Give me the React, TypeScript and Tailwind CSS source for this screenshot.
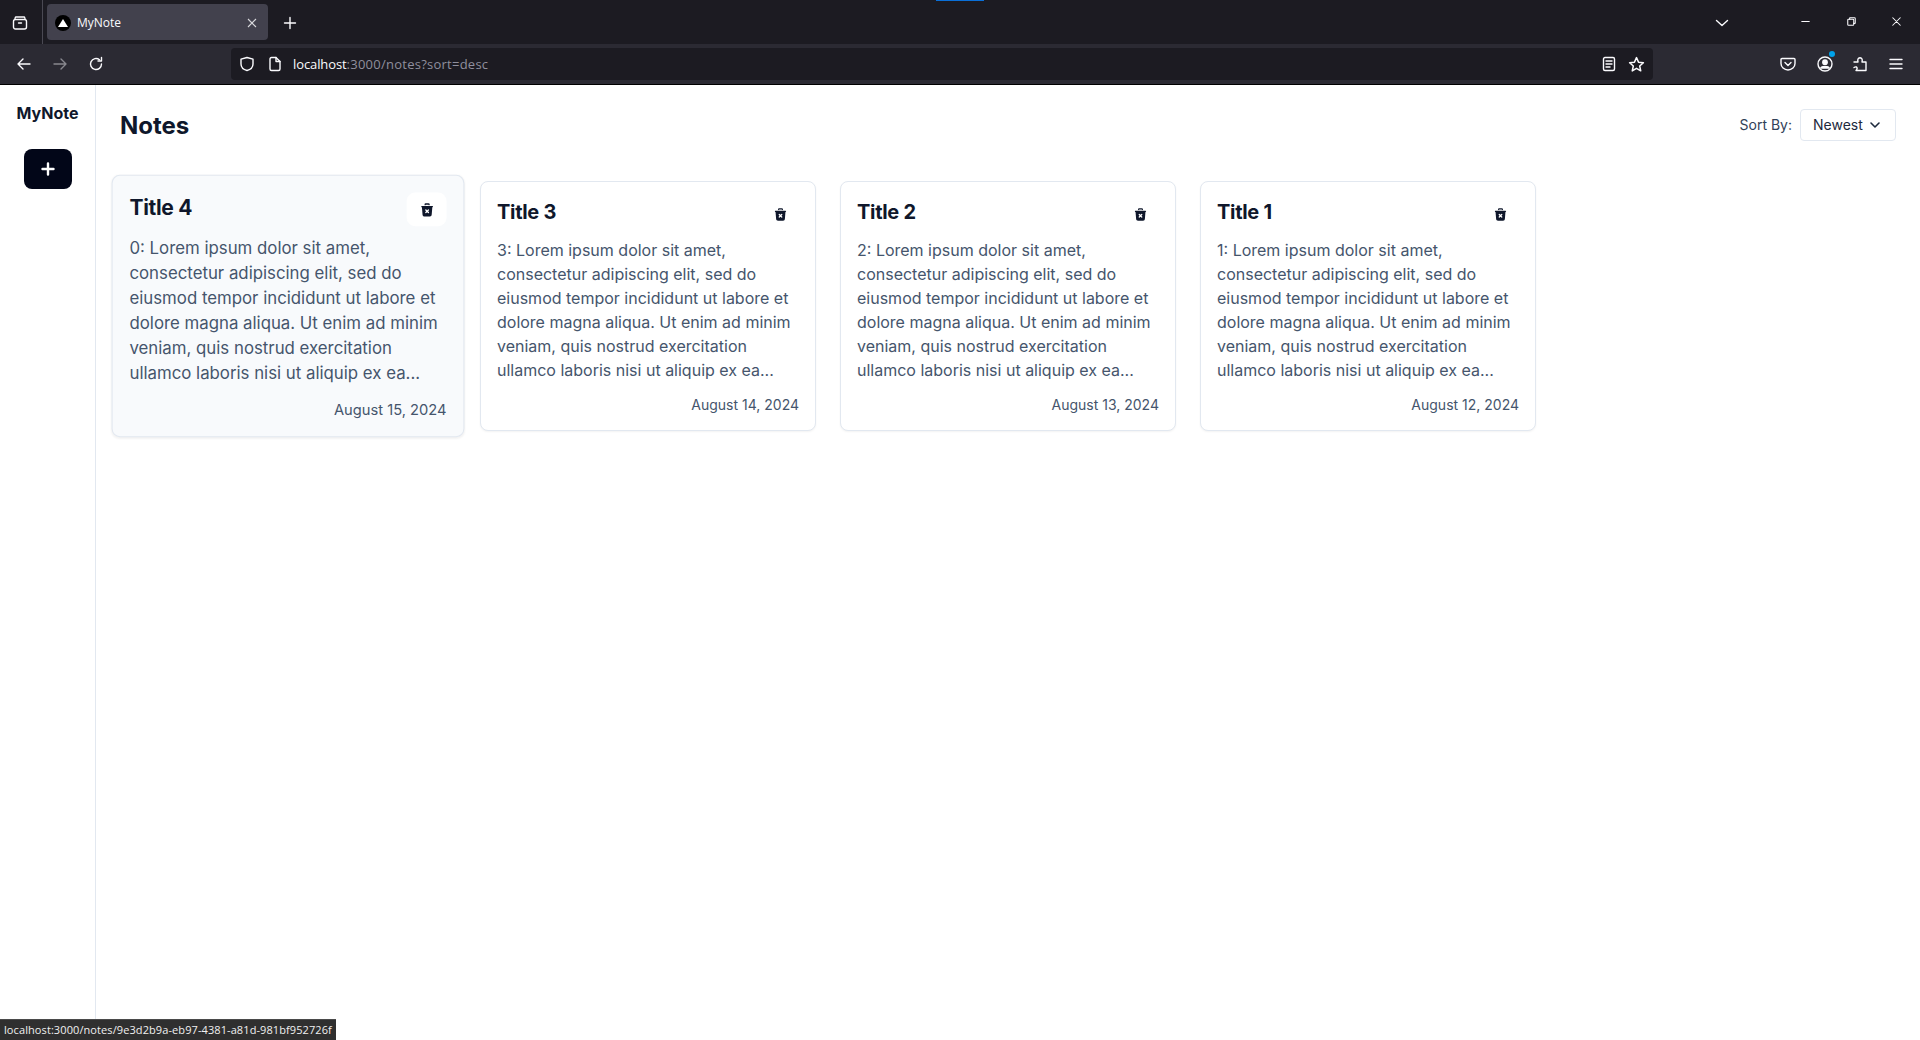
import { TbTrashXFilled } from "react-icons/tb";
import { FiChevronDown } from "react-icons/fi";

const stroke = { fill: "none", stroke: "#fbfbfe", strokeWidth: 1.4, strokeLinecap: "round" as const, strokeLinejoin: "round" as const };

function Ico({ children, size = 16, w = 36, className = "" }: { children: React.ReactNode; size?: number; w?: number; className?: string }) {
  return (
    <div className={`flex shrink-0 items-center justify-center ${className}`} style={{ width: w }}>
      <svg width={size} height={size} viewBox="0 0 16 16" {...stroke}>{children}</svg>
    </div>
  );
}

const notes = [
  { title: "Title 4", n: 0, date: "August 15, 2024", hover: true },
  { title: "Title 3", n: 3, date: "August 14, 2024" },
  { title: "Title 2", n: 2, date: "August 13, 2024" },
  { title: "Title 1", n: 1, date: "August 12, 2024" },
];

const lorem = "Lorem ipsum dolor sit amet, consectetur adipiscing elit, sed do eiusmod tempor incididunt ut labore et dolore magna aliqua. Ut enim ad minim veniam, quis nostrud exercitation ullamco laboris nisi ut aliquip ex ea...";

function Card({ title, n, date, hover }: { title: string; n: number; date: string; hover?: boolean }) {
  return (
    <div className={`w-[336px] rounded-lg border border-slate-200 p-4 shadow-xs ${hover ? "scale-105 bg-slate-50" : "bg-white"}`}>
      <div className="mb-2 flex items-start justify-between">
        <h2 className="text-xl font-bold leading-7 tracking-[-0.3px] text-slate-900">{title}</h2>
        <button className={`flex h-8 w-[38px] items-center justify-center rounded-lg text-slate-900 ${hover ? "bg-white" : ""}`}>
          <TbTrashXFilled size={15} />
        </button>
      </div>
      <p className="text-base leading-6 text-slate-600">{n}: {lorem}</p>
      <p className="mt-[13px] -mb-px text-right text-sm leading-5 text-slate-600">{date}</p>
    </div>
  );
}

export default function App() {
  return (
    <div className="relative flex h-[1040px] flex-col overflow-hidden bg-white font-['Inter',sans-serif]">
      {/* tab strip */}
      <div className="relative flex h-11 shrink-0 items-center bg-[#1c1b22] font-['Open_Sans',sans-serif]">
        <div className="absolute left-[936px] top-0 h-px w-[48px] bg-[#0a6fd8]" />
        <Ico w={40} className="mr-[2px] pt-[2px]">
          <path d="M3 3.5 L3.6 2 H12.4 L13 3.5" />
          <rect x="1.5" y="4.5" width="13" height="9.5" rx="2" />
          <path d="M6.5 8 H9.5" />
        </Ico>
        <div className="h-11 w-px bg-[#4a4953]" />
        <div className="ml-1 flex h-9 w-[221px] items-center rounded bg-[#42414d] pl-2 pr-[10px] pt-[2px]">
          <div className="flex h-4 w-4 items-center justify-center rounded-full bg-black">
            <svg width="10" height="8" viewBox="0 0 10 8"><path d="M5 0 L10 8 H0 Z" fill="#fff" /></svg>
          </div>
          <span className="ml-[6px] flex-1 text-xs text-[#fbfbfe]">MyNote</span>
          <svg width="12" height="12" viewBox="0 0 12 12" fill="none" stroke="#d8d8dc" strokeWidth="1.1"><path d="M2 2 L10 10 M10 2 L2 10" /></svg>
        </div>
        <Ico w={44} className="pt-[2px]"><path d="M8 2.5 V13.5 M2.5 8 H13.5" /></Ico>
        <div className="flex-1" />
        <Ico w={32} size={16} className="pt-[2px]"><path d="M2.5 5.5 L8 10.5 L13.5 5.5" /></Ico>
        <div className="w-[44px]" />
        <Ico w={46} size={12} className="pl-[4px] pt-[2px]"><path d="M1 6 H11" /></Ico>
        <Ico w={46} size={12} className="pl-[4px] pt-[2px]"><rect x="1" y="3" width="8" height="8" rx="1" /><path d="M3.5 3 V1.5 Q3.5 1 4 1 H10 Q11 1 11 2 V8 Q11 8.5 10.5 8.5 H9" /></Ico>
        <Ico w={46} size={12} className="pl-[2px] pt-[2px]"><path d="M1 1 L11 11 M11 1 L1 11" /></Ico>
      </div>

      {/* toolbar */}
      <div className="flex h-[41px] shrink-0 items-center border-b border-black bg-[#2b2a33] pl-[6px] pr-1 font-['Open_Sans',sans-serif]">
        <Ico w={36}><path d="M2 8 H14 M2 8 L7 3 M2 8 L7 13" /></Ico>
        <Ico w={36}><g opacity="0.45"><path d="M14 8 H2 M14 8 L9 3 M14 8 L9 13" /></g></Ico>
        <Ico w={36}><path d="M13.5 8 A5.5 5.5 0 1 1 11.5 3.8" /><path d="M13.5 1.5 V5 H10" /></Ico>
        <div className="ml-[117px] flex h-8 w-[1422px] shrink-0 items-center rounded bg-[#1c1b22] pl-2 pr-[7px]">
          <Ico w={16}><path d="M8 1.5 L14 3.2 V8 C14 11.5 11 13.7 8 14.5 C5 13.7 2 11.5 2 8 V3.2 Z" /></Ico>
          <Ico w={16} className="ml-3"><path d="M3 3 Q3 1.5 4.5 1.5 H9 L13 5.5 V13 Q13 14.5 11.500 14.5 H4.5 Q3 14.5 3 13 Z" /><path d="M9 1.5 V5.5 H13" /></Ico>
          <span className="ml-[10px] flex-1 pt-[2px] text-[13px] tracking-[-0.1px] text-[#fbfbfe]">localhost<span className="tracking-[0.25px] text-[#8f8f9d]">:3000/notes?sort=desc</span></span>
          <Ico w={16}><rect x="2.500" y="1.500" width="11" height="13" rx="1.500" /><path d="M5 5 H11 M5 8 H11 M5 11 H9" /></Ico>
          <Ico w={20} size={17} className="ml-[9px]"><path d="M8 1.500 L9.900 5.800 L14.500 6.300 L11 9.400 L12 14 L8 11.600 L4 14 L5 9.400 L1.500 6.300 L6.100 5.800 Z" /></Ico>
        </div>
        <div className="w-[117px] shrink-0" />
        <Ico w={36}><path d="M2 2.500 H14 Q15 2.500 15 3.500 V7.500 A7 6.500 0 0 1 1 7.500 V3.500 Q1 2.500 2 2.500 Z" /><path d="M5 6.500 L8 9.500 L11 6.500" /></Ico>
        <div className="relative">
          <Ico w={37}><circle cx="8" cy="8" r="7" /><circle cx="8" cy="6.200" r="2.200" fill="#fbfbfe" /><path d="M3.800 12 C4.500 9.800 11.500 9.800 12.200 12 Z" fill="#fbfbfe" /></Ico>
          <div className="absolute right-[8px] top-[-5px] h-[6px] w-[6px] rounded-full bg-[#00a2ea]" />
        </div>
        <Ico w={34}><path d="M2 6 H6 Q5 2 8 1.700 Q11 2 10 6 H14 V14.500 H4 Q6 12.500 4.500 11 Q3.500 10.500 2 11.500" /></Ico>
        <Ico w={38}><path d="M2 3.500 H14 M2 8 H14 M2 12.500 H14" /></Ico>
      </div>

      {/* page */}
      <div className="flex flex-1">
        <aside className="flex w-24 shrink-0 flex-col items-center border-r border-slate-200 pt-4">
          <div className="text-base font-bold leading-6 text-slate-900">MyNote</div>
          <button className="mt-6 flex h-10 w-12 items-center justify-center rounded-lg bg-slate-950 text-white">
            <svg width="16" height="16" viewBox="0 0 16 16" fill="none" stroke="#fff" strokeWidth="2.4" strokeLinecap="round"><path d="M8 2.500 V13.500 M2.500 8 H13.500" /></svg>
          </button>
        </aside>
        <main className="flex-1 px-6 pt-6">
          <div className="flex h-8 items-center justify-between">
            <h1 className="pt-[2px] text-2xl font-bold leading-8 text-slate-900">Notes</h1>
            <div className="flex items-center gap-2">
              <span className="text-sm text-slate-700">Sort By:</span>
              <button className="flex h-8 w-24 items-center justify-between rounded border border-slate-200 bg-white px-3 text-sm text-slate-800">
                Newest <FiChevronDown size={16} strokeWidth={2.4} />
              </button>
            </div>
          </div>
          <div className="mt-10 flex flex-wrap items-start gap-6">
            {notes.map((x) => <Card key={x.title} {...x} />)}
          </div>
        </main>
      </div>

      {/* status overlay */}
      <div className="absolute bottom-0 left-0 flex h-[21px] w-[336px] items-center border-t border-[#4a4a4a] bg-[#2f2f2f] pl-1 font-['Open_Sans',sans-serif] text-[11px] tracking-[0.09px] whitespace-nowrap text-[#f0f0f0]">
        localhost:3000/notes/9e3d2b9a-eb97-4381-a81d-981bf952726f
      </div>
    </div>
  );
}
